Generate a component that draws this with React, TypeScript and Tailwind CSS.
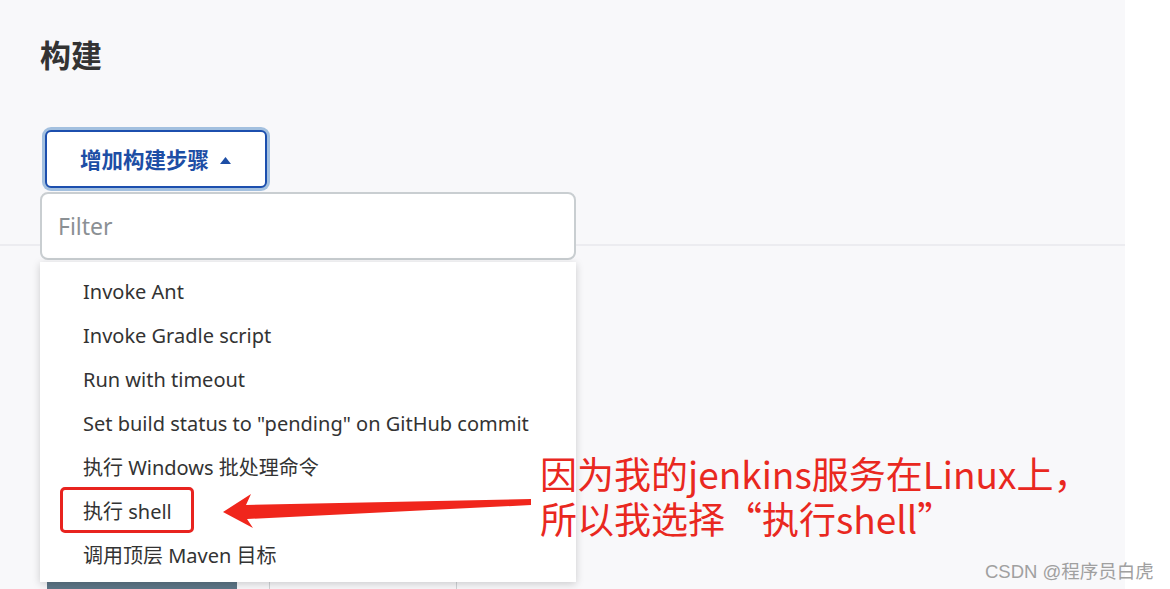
const items = [
  'Invoke Ant',
  'Invoke Gradle script',
  'Run with timeout',
  'Set build status to "pending" on GitHub commit',
  '执行 Windows 批处理命令',
  '执行 shell',
  '调用顶层 Maven 目标',
];

export default function App() {
  return (
    <div className="relative flex w-[1170px] h-[589px] overflow-hidden bg-white font-['Noto_Sans','Noto_Sans_CJK_SC',sans-serif]">
      {/* page body */}
      <div className="relative w-[1125px] h-full bg-[#f8f8fa]">
        <div className="pl-10 pt-[35px]">
          <h1 className="text-[31px] leading-[40px] font-bold text-[#333]">构建</h1>
          <button className="mt-[55px] ml-[5px] w-[222px] h-[58px] pt-[3px] flex items-center justify-center gap-[10px] bg-white border-2 border-[#1c4fae] rounded-md ring-[3px] ring-[#a3c0df] text-[#1d4ea5] text-[21.5px] font-bold">
            <span>增加构建步骤</span>
            <svg width="13" height="9" viewBox="0 0 13 9">
              <path d="M6.5 1 L12 8 L1 8 Z" fill="#1d4ea5" />
            </svg>
          </button>
        </div>

        <div className="mt-[56px] border-t-2 border-[#ececf0]">
          <div className="mt-[333px] ml-[47px] flex h-[10px] items-start">
            <div className="w-[190px] h-full bg-[#5d7687]" />
            <div className="ml-[32px] w-px h-full bg-[#cfd3d6]" />
            <div className="ml-[186px] w-px h-full bg-[#cfd3d6]" />
          </div>
        </div>

        {/* dropdown */}
        <div className="absolute left-10 top-[192px] w-[536px]">
          <div className="h-[68px] flex items-center px-4 bg-white border-2 border-[#c9ced1] rounded-lg">
            <span className="text-[23px] text-[#8b9094]">Filter</span>
          </div>
          <div className="relative mt-[2px] h-[320px] pt-[8px] bg-white shadow-[0_2px_8px_rgba(0,0,0,0.18)]">
            {items.map((t) => (
              <div key={t} className="h-[44px] flex items-center pl-[43px] text-[20px] text-[#333]">
                {t}
              </div>
            ))}
            <div className="absolute left-[20px] top-[225px] w-[134px] h-[46px] border-[3px] border-[#e8231f] rounded-[5px]" />
          </div>
        </div>

        {/* annotation */}
        <svg className="absolute left-[218px] top-[490px]" width="320" height="40" viewBox="218 490 320 40">
          <path d="M223 512 L251 494 L246 505 L531 499 L531 505 L247 519 L253 528 Z" fill="#f0261c" />
        </svg>
        <div className="absolute left-[540px] top-[451px] text-[37px] leading-[45px] text-[#e9281f] font-['Noto_Sans_CJK_SC',sans-serif]">
          <div>因为我的jenkins服务在Linux上，</div>
          <div>所以我选择“执行shell”</div>
        </div>
      </div>

      <div className="absolute left-[985px] top-[558px] text-[18.5px] text-[#a0a0a0] font-['Liberation_Sans','Noto_Sans_CJK_SC',sans-serif]">
        CSDN @程序员白虎
      </div>
    </div>
  );
}
